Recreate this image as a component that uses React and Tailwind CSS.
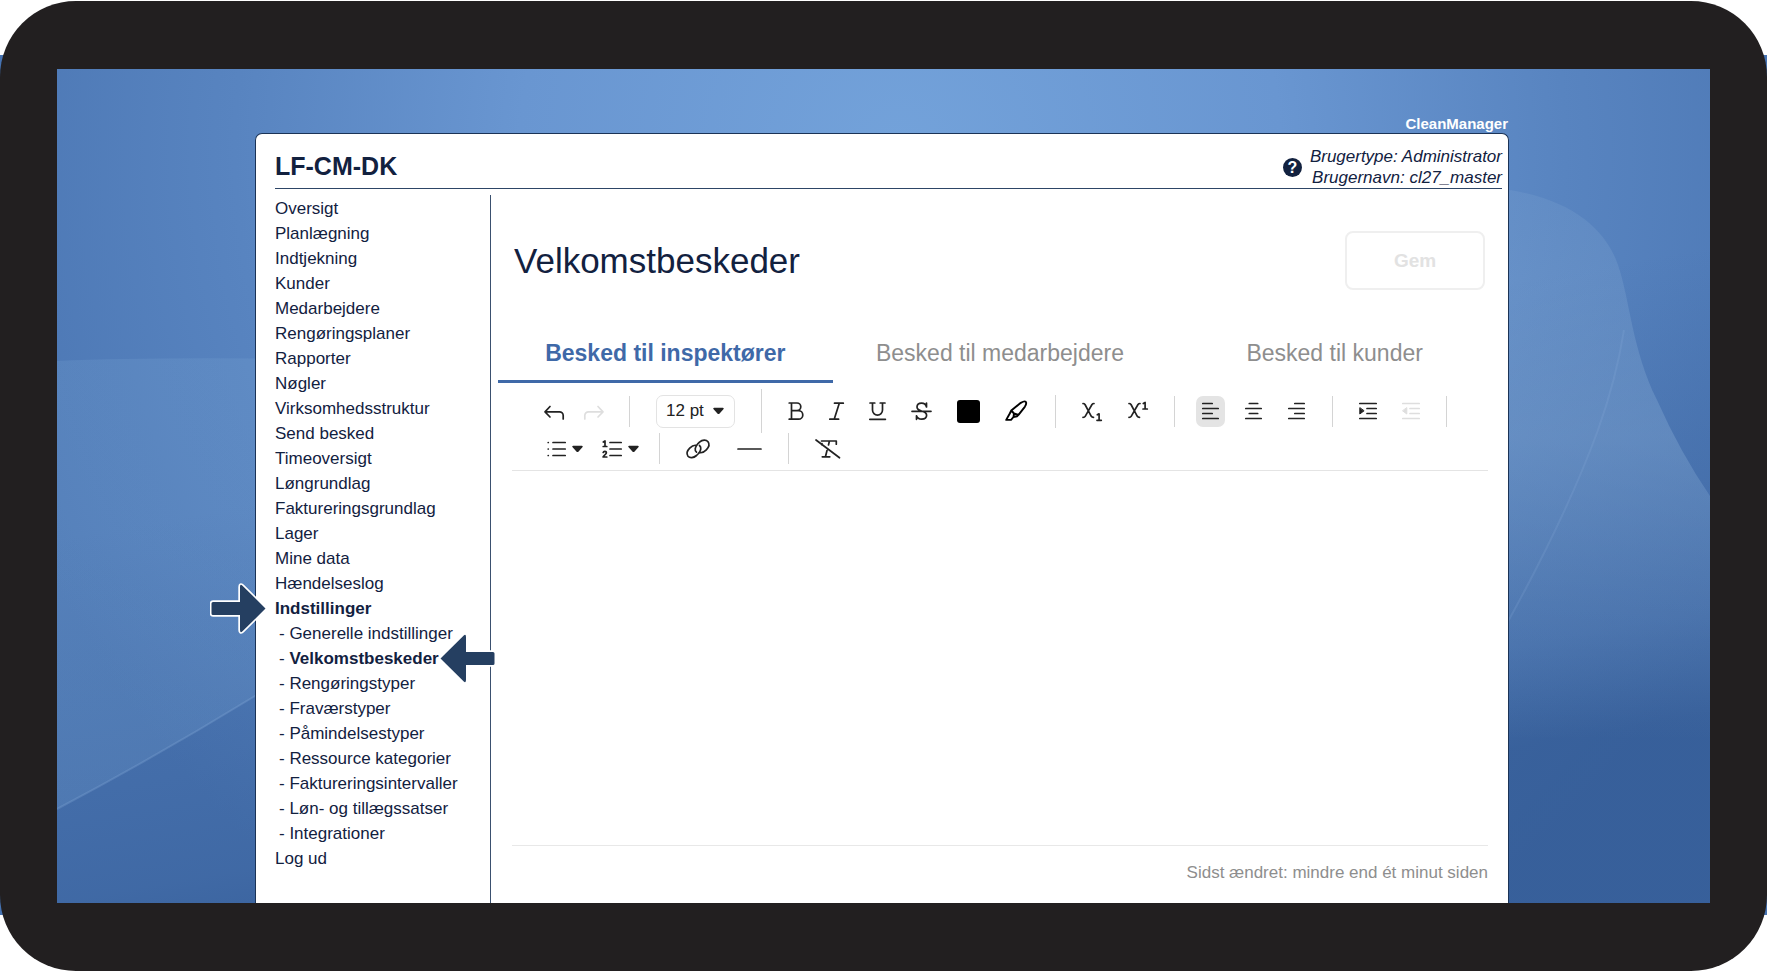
import React, { useState } from 'react';

const MENU = [
  'Oversigt', 'Planlægning', 'Indtjekning', 'Kunder', 'Medarbejdere', 'Rengøringsplaner',
  'Rapporter', 'Nøgler', 'Virksomhedsstruktur', 'Send besked', 'Timeoversigt', 'Løngrundlag',
  'Faktureringsgrundlag', 'Lager', 'Mine data', 'Hændelseslog',
];

const SUBMENU = [
  'Generelle indstillinger', 'Velkomstbeskeder', 'Rengøringstyper', 'Fraværstyper',
  'Påmindelsestyper', 'Ressource kategorier', 'Faktureringsintervaller',
  'Løn- og tillægssatser', 'Integrationer',
];

const TABS = ['Besked til inspektører', 'Besked til medarbejdere', 'Besked til kunder'];

function Wallpaper() {
  return (
    <svg className="absolute inset-0 w-full h-full" viewBox="57 69 1653 834" preserveAspectRatio="none" aria-hidden="true">
      <defs>
        <radialGradient id="glow" gradientUnits="userSpaceOnUse" cx="900" cy="150" r="950">
          <stop offset="0" stopColor="#73a2da" />
          <stop offset="0.4" stopColor="#6996d1" />
          <stop offset="0.7" stopColor="#5884c0" />
          <stop offset="1" stopColor="#4b76b3" />
        </radialGradient>
        <linearGradient id="dusk" x1="0" y1="0" x2="0.35" y2="1">
          <stop offset="0.5" stopColor="#2f5690" stopOpacity="0" />
          <stop offset="0.89" stopColor="#2f5690" stopOpacity="0.4" />
          <stop offset="1" stopColor="#2f5690" stopOpacity="0.7" />
        </linearGradient>
        <linearGradient id="leftSheen" x1="0" y1="0" x2="0" y2="1">
          <stop offset="0" stopColor="#7fabd8" stopOpacity="0.2" />
          <stop offset="1" stopColor="#7fabd8" stopOpacity="0.2" />
        </linearGradient>
        <linearGradient id="rightSheen" x1="0" y1="0" x2="0" y2="1">
          <stop offset="0" stopColor="#8aaed6" stopOpacity="0.18" />
          <stop offset="0.45" stopColor="#8aaed6" stopOpacity="0.36" />
          <stop offset="1" stopColor="#8aaed6" stopOpacity="0" />
        </linearGradient>
      </defs>
      <rect x="57" y="69" width="1653" height="834" fill="url(#glow)" />
      <rect x="57" y="69" width="1653" height="834" fill="url(#dusk)" />
      <path d="M57 361 Q150 357 300 359 V668 Q180 744 57 809 Z" fill="url(#leftSheen)" />
      <path d="M57 809 Q180 744 300 668" fill="none" stroke="#8fb4de" strokeOpacity="0.25" strokeWidth="2" />
      <path d="M1480 187 C1570 192 1606 230 1618 265 C1630 300 1632 350 1657 400 Q1680 452 1710 496 V740 H1480 Z" fill="url(#rightSheen)" />
      <path d="M1624 330 Q1616 380 1598 430 Q1565 520 1500 636" fill="none" stroke="#8fb4de" strokeOpacity="0.18" strokeWidth="2" />
    </svg>
  );
}

function Icon({ w = 20, children }) {
  return (
    <svg
      width={w} height="20" viewBox={`0 0 ${w} 20`} className="shrink-0 overflow-visible"
      fill="none" stroke="currentColor" strokeWidth="1.7" strokeLinecap="round" strokeLinejoin="round" aria-hidden="true"
    >
      {children}
    </svg>
  );
}

function Tool({ label, className = '', disabled, children }) {
  return (
    <button type="button" aria-label={label} title={label} disabled={disabled}
      className={`flex items-center justify-center shrink-0 disabled:text-[#dedede] ${className}`}>
      {children}
    </button>
  );
}

const Caret = () => (
  <svg width="11" height="8" viewBox="0 0 11 8" className="shrink-0" fill="currentColor" aria-hidden="true">
    <path d="M1.2 0.8h8.6c1 0 1.2.9.6 1.5L6.6 6.5c-.7.8-1.5.8-2.2 0L.6 2.3C0 1.7.2.8 1.2.8z" />
  </svg>
);

const Divider = ({ className = 'h-[31px]' }) => <span className={`w-px mx-[26px] shrink-0 bg-[#d4d4d4] ${className}`} />;

function Arrow({ flip, className }) {
  return (
    <svg width="56" height="51" viewBox="0 0 56 51" className={`absolute z-10 pointer-events-none ${className}`} aria-hidden="true">
      <path
        transform={flip ? 'translate(56 0) scale(-1 1)' : undefined}
        d="M3 19H30V4Q30 0.5 32.5 2.7L55.5 25.500 32.5 48.3Q30 50.5 30 47V32H3Q1.500 32 1.500 30.500V20.500Q1.500 19 3 19Z"
        fill="#253f61" stroke="#fff" strokeWidth="3.4" strokeLinejoin="round" paintOrder="stroke"
      />
    </svg>
  );
}

function Sidebar() {
  return (
    <nav className="w-[216px] shrink-0 mt-[6px] pt-px border-r border-[#3a506f]">
      <ul className="text-[17px] leading-[25px] whitespace-nowrap">
        {MENU.map((label) => (
          <li key={label}><a href="#">{label}</a></li>
        ))}
        <li className="relative">
          <Arrow className="-left-[65px] -top-[13px]" />
          <a href="#" className="font-bold">Indstillinger</a>
          <ul className="pl-[4px]">
            {SUBMENU.map((label) => (
              <li key={label} className="relative">
                {'- '}
                <a href="#" className={label === 'Velkomstbeskeder' ? 'font-bold' : ''}>{label}</a>
                {label === 'Velkomstbeskeder' && <Arrow flip className="left-[161px] -top-[13px]" />}
              </li>
            ))}
          </ul>
        </li>
        <li><a href="#">Log ud</a></li>
      </ul>
    </nav>
  );
}

function Toolbar() {
  return (
    <div role="toolbar" aria-label="Formatering" className="mx-[14px] pt-[6px] pb-[6px] pl-[32px] border-b border-[#e4e4e4] text-[#222]">
      <div className="flex items-center h-[44px]">
        <div className="flex gap-[20px] -mr-px">
          <Tool label="Fortryd">
            <Icon><path d="M6 5.500 1 10.800l5 5.200M1.500 10.800H15.500a3.700 3.700 0 0 1 3.700 3.700V18" /></Icon>
          </Tool>
          <Tool label="Gentag" disabled>
            <Icon><path d="M14 5.500l5 5.300-5 5.200M18.500 10.800H4.500A3.700 3.700 0 0 0 .8 14.500V18" /></Icon>
          </Tool>
        </div>
        <Divider />
        <label className="relative flex items-center shrink-0">
          <select aria-label="Skriftstørrelse" className="appearance-none w-[79px] h-[33px] pl-[9px] border border-[#e3e3e3] rounded-[7px] bg-white text-[17px] text-[#222]">
            <option>12 pt</option>
            <option>14 pt</option>
          </select>
          <span className="absolute right-[11px] pointer-events-none"><Caret /></span>
        </label>
        <Divider className="h-[44px]" />
        <div className="flex items-center gap-[25px]">
          <Tool label="Fed">
            <Icon w={16}><path d="M1.200 2H9a3.800 3.800 0 0 1 0 7.600H3.500M9 9.600h1.500a4.300 4.300 0 0 1 0 8.600H1.200M3.500 2v16.200" /></Icon>
          </Tool>
          <Tool label="Kursiv">
            <Icon w={15}><path d="M5.500 2.200h8.800M.8 18.200h8.800M10.300 2.200 5.200 18.200" /></Icon>
          </Tool>
          <Tool label="Understreget">
            <Icon w={17}><path d="M1 2h4.800M11.200 2H16M3.500 2v7a5 5.200 0 0 0 10 0V2M.8 18.300h15.600" /></Icon>
          </Tool>
          <Tool label="Gennemstreget">
            <Icon w={21}><path d="M15.500 2v4C14.800 3.600 13 2.200 10.600 2.200 7.600 2.200 6 4 6 6.100c0 2.400 2 3.300 4.600 4 3.400.8 5 2 5 4.200 0 2.300-2 3.900-4.900 3.900-2.700 0-4.500-1.300-5.200-3.400v3.500M1 10.300h19" /></Icon>
          </Tool>
          <Tool label="Tekstfarve" className="w-[23px] h-[23px] rounded-[3px] bg-black" />
          <Tool label="Fremhæv">
            <Icon w={24}><path stroke="#000" strokeWidth="1.900" d="M6.300 9.500 15.800 1.800Q20.800-1 21.200 1.800 21.300 3.800 19.800 5.800L13.500 13.800 12 15.200 8.500 16 6 18.900H1.200L4.800 12.500ZM6.300 9.500l2.700 3 4.500 1.300M9 12.500l-.5 3.500" /></Icon>
          </Tool>
        </div>
        <Divider className="h-[33px]" />
        <div className="flex gap-[26px]">
          <Tool label="Sænket skrift">
            <Icon><path d="M1 2.500q1.300 0 2 1l6.300 11.800q.6 1 2.200 1M12 2.500q-1.300 0-2 1L3.200 15.300q-.6 1-2.200 1M15.300 13.800l1.800-1v6.500M15 19.300h4.300" /></Icon>
          </Tool>
          <Tool label="Hævet skrift">
            <Icon><path d="M1 2.500q1.300 0 2 1l6.300 11.800q.6 1 2.200 1M12 2.500q-1.300 0-2 1L3.200 15.300q-.6 1-2.200 1M15.300 2.500l1.800-1V8M15 8h4.300" /></Icon>
          </Tool>
        </div>
        <Divider />
        <div className="flex gap-[14px] -mx-[5px]">
          <Tool label="Venstrejuster" className="w-[29px] h-[31px] rounded-[7px] bg-[#e4e4e4]">
            <Icon w={17}><path d="M.8 2.500h9.400M.8 7.500h15.400M.8 12.500h9.400M.8 17.500h15.400" /></Icon>
          </Tool>
          <Tool label="Centrer" className="w-[29px] h-[31px]">
            <Icon w={17}><path d="M4.300 2.500h8.400M.8 7.500h15.400M4.300 12.500h8.400M.8 17.500h15.400" /></Icon>
          </Tool>
          <Tool label="Højrejuster" className="w-[29px] h-[31px]">
            <Icon w={17}><path d="M6.800 2.500h9.400M.8 7.500h15.400M6.800 12.500h9.400M.8 17.500h15.400" /></Icon>
          </Tool>
        </div>
        <Divider />
        <div className="flex gap-[25px]">
          <Tool label="Forøg indrykning">
            <Icon w={18}><path d="M.8 2.500h16.400M8 7.500h9.200M8 12.500h9.200M.8 17.500h16.400" /><path d="M.8 7v6l4-3z" fill="currentColor" strokeWidth="1" /></Icon>
          </Tool>
          <Tool label="Formindsk indrykning" disabled>
            <Icon w={18}><path d="M.8 2.500h16.400M8 7.500h9.200M8 12.500h9.200M.8 17.500h16.400" /><path d="M4.800 7v6l-4-3z" fill="currentColor" strokeWidth="1" /></Icon>
          </Tool>
        </div>
        <Divider />
      </div>

      <div className="flex items-center h-[31px] pl-[3px]">
        <div className="flex gap-[19px] -mr-[6px]">
          <Tool label="Punktopstilling" className="gap-[6px]">
            <Icon w={19}><path d="M6 3.500h12.200M6 10h12.200M6 16.500h12.200M1.200 3.500h.1M1.200 10h.1M1.200 16.500h.1" /></Icon>
            <Caret />
          </Tool>
          <Tool label="Nummereret liste" className="gap-[6px]">
            <Icon w={20}><path d="M8 3.500h11.200M8 10h11.200M8 16.500h11.200M1.300 3 3 2v5.500M1.200 7.500h3.600M1.200 13.500c.4-1.500 3.200-1.400 3.200.2 0 1.300-2.200 2.300-3.300 4.300h3.700" /></Icon>
            <Caret />
          </Tool>
        </div>
        <Divider />
        <div className="flex gap-[26px]">
          <Tool label="Link">
            <Icon w={25}>
              <path d="M10.500 13.200C8.300 11.400 9 8 11.500 5.200L13.500 3.200C16.500.6 20.200.6 22 2.800c1.700 2.300.8 5.500-1.700 8-2 2-4.500 3.400-6.800 2.800" />
              <path d="M13.500 6.500c2.200 1.800 1.500 5.200-1 8l-2 2C7.500 19.100 3.800 19.400 2 17.200.3 14.900 1.200 11.700 3.700 9.200c2-2 4.500-3.400 6.600-2.800" />
            </Icon>
          </Tool>
          <Tool label="Vandret linje">
            <Icon w={25}><path d="M1 10h23" /></Icon>
          </Tool>
        </div>
        <Divider />
        <Tool label="Ryd formatering">
          <Icon w={26}><path d="M1 1 24.500 18.800M6.500 2h14.800v3.200M7 6V4.500M14.300 2.500 13.500 6M12 11.500 10.500 17.500M7.300 17.800h7.500" /></Icon>
        </Tool>
      </div>
    </div>
  );
}

export default function App() {
  const [tab, setTab] = useState(0);

  return (
    <div className="min-h-screen flex flex-col pt-px bg-[linear-gradient(to_bottom,white_55px,#4673b2_55px,#4673b2_calc(100%-56px),white_calc(100%-56px))] font-['Liberation_Sans',Arial,sans-serif] text-[#12213f]">
      <div className="flex-1 flex flex-col rounded-[76px] bg-[#221f20] pt-[68px] pb-[68px] px-[57px]">
        <div className="relative flex-1 flex flex-col pt-[45px] pl-[198px] pr-[201px]">
          <Wallpaper />
          <p className="relative pr-px text-right text-[15px] leading-[19px] font-bold text-white">CleanManager</p>

          <div className="relative flex-1 flex flex-col bg-white border border-b-0 border-[#1b3356] rounded-t-[7px]">
            <header className="ml-[19px] mr-[6px] pt-[12px] flex justify-between border-b border-[#2d4566]">
              <h1 className="text-[25px] leading-[40px] font-bold">LF-CM-DK</h1>
              <div className="flex items-center gap-[8px]">
                <button type="button" aria-label="Hjælp" className="w-[19px] h-[19px] rounded-full bg-[#12213f] text-white text-[16px] leading-[19px] font-bold">?</button>
                <p className="text-[17px] leading-[21px] italic text-right">
                  Brugertype: Administrator<br />
                  Brugernavn: cl27_master
                </p>
              </div>
            </header>

            <div className="flex-1 flex pl-[19px]">
              <Sidebar />
              <main className="flex-1 min-w-0 flex flex-col pl-[7px] pr-[6px]">
                <div className="mt-[42px] pl-[16px] pr-[17px] flex items-center justify-between">
                  <h2 className="text-[35px] leading-[59px]">Velkomstbeskeder</h2>
                  <button type="button" disabled className="w-[140px] h-[59px] pt-[2px] border-2 border-[#efefef] rounded-[8px] text-[19px] font-bold text-[#e2e2e2]">Gem</button>
                </div>

                <div role="tablist" className="mt-[35px] grid grid-cols-3">
                  {TABS.map((label, i) => (
                    <button key={label} type="button" role="tab" aria-selected={tab === i} onClick={() => setTab(i)}
                      className={`h-[58px] pt-[2px] border-b-3 text-[23px] ${
                        tab === i ? 'border-[#3f69a8] text-[#3f69a8] font-bold' : 'border-transparent text-[#8e8e8e]'
                      }`}>
                      {label}
                    </button>
                  ))}
                </div>

                <Toolbar />
                <textarea aria-label={TABS[tab]} className="flex-1 mx-[14px] p-4 resize-none outline-none text-[17px]" />
                <p className="mx-[14px] h-[58px] border-t border-[#e8e8e8] text-right text-[17px] leading-[53px] text-[#8e8e8e]">
                  Sidst ændret: mindre end ét minut siden
                </p>
              </main>
            </div>
          </div>
        </div>
      </div>
    </div>
  );
}
